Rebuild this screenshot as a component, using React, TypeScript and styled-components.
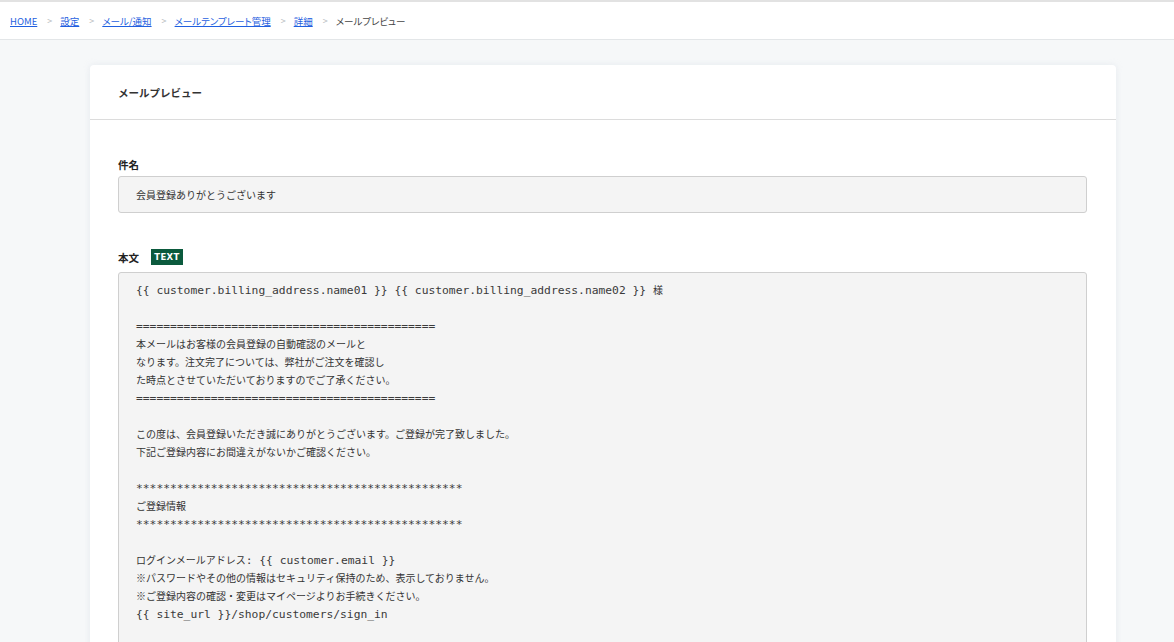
import styled, { createGlobalStyle } from "styled-components";

const GlobalStyle = createGlobalStyle`
  html, body {
    margin: 0;
    padding: 0;
    background: #f6f8f9;
    font-family: "Noto Sans CJK JP", "Noto Sans", sans-serif;
    color: #333;
  }
`;

const Page = styled.div`
  min-height: 100vh;
  border-top: 2px solid #e2e2e2;
  box-sizing: border-box;
`;

const Header = styled.header`
  height: 37px;
  background: #fff;
  border-bottom: 1px solid #e3e6e8;
  display: flex;
  align-items: center;
  padding-left: 10px;
`;

const Crumbs = styled.ol`
  display: flex;
  align-items: center;
  list-style: none;
  margin: 0;
  padding: 0;
  font-size: 9.5px;
  font-feature-settings: "palt";
  li + li::before {
    content: ">";
    color: #b5b9bd;
    font-size: 9px;
    margin: 0 8px 0 10px;
  }
`;

const Crumb = styled.li`
  display: flex;
  align-items: center;
  color: #444;
`;

const CrumbLink = styled.a`
  color: #1f5fe0;
  text-decoration: underline;
  cursor: pointer;
`;

const Main = styled.main`
  padding: 25px 58px 0 90px;
`;

const Card = styled.section`
  background: #fff;
  border-radius: 4px;
  box-shadow: 0 0 6px rgba(200, 210, 220, 0.35);
`;

const CardHeader = styled.div`
  height: 54px;
  border-bottom: 1px solid #dcdcdc;
  display: flex;
  align-items: center;
  padding-left: 28px;
`;

const CardTitle = styled.h2`
  margin: 0;
  font-size: 10.5px;
  font-weight: 700;
  color: #333;
`;

const CardBody = styled.div`
  padding: 36px 29px 0 28px;
`;

const Field = styled.div`
  & + & {
    margin-top: 36px;
  }
`;

const LabelRow = styled.div<{ $space: number }>`
  display: flex;
  align-items: center;
  gap: 12px;
  height: 16px;
  margin-bottom: ${(p) => p.$space}px;
`;

const Label = styled.span`
  font-size: 10.5px;
  font-weight: 700;
  color: #222;
`;

const Badge = styled.span`
  background: #0b5a3d;
  color: #fff;
  font-family: "DejaVu Sans", sans-serif;
  font-size: 8.5px;
  font-weight: 700;
  letter-spacing: 0.4px;
  width: 32px;
  height: 16px;
  display: inline-flex;
  align-items: center;
  justify-content: center;
`;

const Box = styled.div<{ $mono?: boolean }>`
  background: #f4f4f4;
  border: 1px solid #cfcfcf;
  border-radius: 3px;
  padding: ${(p) => (p.$mono ? "8px 17px 20px" : "0 17px")};
  height: ${(p) => (p.$mono ? "auto" : "35px")};
  display: ${(p) => (p.$mono ? "block" : "flex")};
  align-items: center;
  font-size: 10px;
  color: #333;
  ${(p) =>
    p.$mono &&
    `
    font-family: "Noto Sans CJK JP", sans-serif;
    white-space: pre-wrap;
    line-height: 18px;
  `}
`;

const Ascii = styled.span`
  font-family: "DejaVu Sans Mono", "Liberation Mono", monospace;
  font-size: 11.3px;
  line-height: 12px;
  color: #3a3a3a;
`;

const body = `{{ customer.billing_address.name01 }} {{ customer.billing_address.name02 }} 様

${"=".repeat(44)}
本メールはお客様の会員登録の自動確認のメールと
なります。注文完了については、弊社がご注文を確認し
た時点とさせていただいておりますのでご了承ください。
${"=".repeat(44)}

この度は、会員登録いただき誠にありがとうございます。ご登録が完了致しました。
下記ご登録内容にお間違えがないかご確認ください。

${"*".repeat(48)}
ご登録情報
${"*".repeat(48)}

ログインメールアドレス: {{ customer.email }}
※パスワードやその他の情報はセキュリティ保持のため、表示しておりません。
※ご登録内容の確認・変更はマイページよりお手続きください。
{{ site_url }}/shop/customers/sign_in

`;

// ascii runs get the wider monospace face, Japanese stays in the CJK face
const renderBody = (text: string) =>
  text.split(/([\x20-\x7e]+)/).map((part, i) =>
    /^[\x20-\x7e]+$/.test(part) ? <Ascii key={i}>{part}</Ascii> : part
  );

const crumbs = ["HOME", "設定", "メール/通知", "メールテンプレート管理", "詳細"];

export default function App() {
  return (
    <Page>
      <GlobalStyle />
      <Header>
        <Crumbs>
          {crumbs.map((c) => (
            <Crumb key={c}>
              <CrumbLink>{c}</CrumbLink>
            </Crumb>
          ))}
          <Crumb>メールプレビュー</Crumb>
        </Crumbs>
      </Header>
      <Main>
        <Card>
          <CardHeader>
            <CardTitle>メールプレビュー</CardTitle>
          </CardHeader>
          <CardBody>
            <Field>
              <LabelRow $space={4}>
                <Label>件名</Label>
              </LabelRow>
              <Box>会員登録ありがとうございます</Box>
            </Field>
            <Field>
              <LabelRow $space={7}>
                <Label>本文</Label>
                <Badge>TEXT</Badge>
              </LabelRow>
              <Box $mono>{renderBody(body)}</Box>
            </Field>
          </CardBody>
        </Card>
      </Main>
    </Page>
  );
}
